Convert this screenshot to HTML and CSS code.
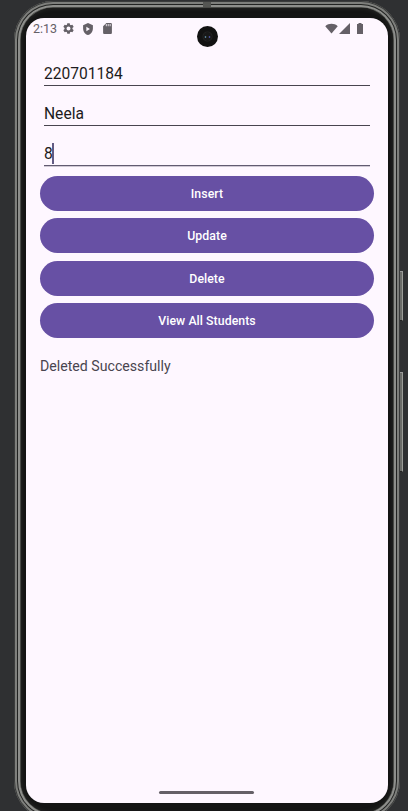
FILE: index.html
```
<!DOCTYPE html>
<html lang="en">
<head>
<meta charset="utf-8">
<title>Students</title>
<link rel="stylesheet" href="styles.css">
</head>
<body>
<div class="phone">
  <span class="seam"></span>
  <span class="side-key power"></span>
  <span class="side-key volume"></span>
  <div class="bezel">
    <main class="screen">
      <header class="status">
        <span class="clock">2:13</span>
        <svg class="gear" viewBox="2 2 20 20"><path d="M19.14 12.94c.04-.3.06-.61.06-.94s-.02-.64-.07-.94l2.03-1.58a.49.49 0 0 0 .12-.61l-1.92-3.32a.49.49 0 0 0-.59-.22l-2.39.96a7 7 0 0 0-1.62-.94l-.36-2.54a.48.48 0 0 0-.48-.41h-3.84a.48.48 0 0 0-.47.41l-.36 2.54a7.4 7.4 0 0 0-1.62.94l-2.39-.96a.48.48 0 0 0-.59.22L2.74 8.87a.48.48 0 0 0 .12.61l2.03 1.58a6 6 0 0 0 0 1.88l-2.03 1.58a.49.49 0 0 0-.12.61l1.92 3.32c.12.22.37.29.59.22l2.39-.96c.5.38 1.03.7 1.62.94l.36 2.54c.05.24.24.41.48.41h3.84c.24 0 .44-.17.47-.41l.36-2.54a7.4 7.4 0 0 0 1.62-.94l2.39.96c.22.08.47 0 .59-.22l1.92-3.32a.48.48 0 0 0-.12-.61zM12 15.6a3.6 3.6 0 1 1 0-7.2 3.6 3.6 0 0 1 0 7.2z"/></svg>
        <svg class="shield" viewBox="3 1 18 22"><path fill-rule="evenodd" d="M12 1 3 5v6c0 5.500 3.800 10.700 9 12 5.200-1.300 9-6.500 9-12V5zM9 8v8l6.500-4z"/></svg>
        <svg class="card" viewBox="4 2 16 20"><path fill-rule="evenodd" d="M18 2h-8L4 8v12a2 2 0 0 0 2 2h12a2 2 0 0 0 2-2V4a2 2 0 0 0-2-2zM9 4h1.500v4H9zm3.500 0H14v4h-1.500zm3.500 0h1.500v4H16z"/></svg>
        <svg class="wifi" viewBox="0 0 14 11"><path d="M.3 3C3.900-.5 10.100-.5 13.700 3L7 11z"/></svg>
        <svg class="signal" viewBox="0 0 11 11"><path d="M0 11 11 0v11z"/></svg>
        <svg class="battery" viewBox="0 0 6 11"><path d="M0 1h1.500V0h3v1H6v10H0z"/></svg>
      </header>
      <span class="camera"></span>
      <form class="form">
        <div class="field">220701184</div>
        <div class="field">Neela</div>
        <div class="field active">8<i class="caret"></i></div>
        <div class="buttons">
          <button type="button">Insert</button>
          <button type="button">Update</button>
          <button type="button">Delete</button>
          <button type="button">View All Students</button>
        </div>
      </form>
      <p class="message">Deleted Successfully</p>
      <div class="home"></div>
    </main>
  </div>
</div>
</body>
</html>
```
FILE: styles.css
```
* { box-sizing: border-box; }
html, body { height: 811px; overflow: hidden; }
body {
  margin: 0;
  padding: 1px 0 0 14px;
  background: #2f3032;
  font-family: Roboto, "Liberation Sans", sans-serif;
}
.phone {
  position: relative;
  width: 386px;
  height: 819px;
  padding: 7px;
  border-radius: 39px;
  background: #151515;
  box-shadow:
    inset 0 0 0 1px #3b3c3c,
    inset 0 0 0 3px #7e7f7c,
    inset 0 0 0 4px #222322,
    inset 0 0 0 6px #8d8e8b,
    inset 0 0 0 7px #484946;
}
.bezel {
  height: 805px;
  padding: 10px 5px 16px;
  border-radius: 32px;
  background: #141414;
  box-shadow: inset 0 0 4px #2a2b29;
}
.screen {
  position: relative;
  display: flex;
  flex-direction: column;
  width: 362px;
  height: 785px;
  border-radius: 18px;
  background: #fef7ff;
}
.seam {
  position: absolute;
  left: 189px;
  top: 1px;
  width: 8px;
  height: 5px;
  background: #555653;
}
.side-key {
  position: absolute;
  left: 386px;
  width: 3px;
  background: #6b6c69;
  border-right: 1px solid #9b9c98;
  border-top: 1px solid #999;
  border-bottom: 1px solid #222;
}
.power { top: 270px; height: 50px; }
.volume { top: 371px; height: 100px; }
.status {
  display: flex;
  align-items: center;
  height: 21px;
  padding: 0 25px 0 7px;
  color: #656067;
}
.status svg { display: block; flex: none; fill: #656067; }
.clock { width: 30px; font-size: 12.500px; line-height: 23px; }
.gear { width: 11px; height: 11px; }
.shield { width: 10px; height: 12px; margin-left: 9px; }
.card { width: 9px; height: 11px; margin-left: 10px; }
.wifi { width: 13px; height: 11px; margin-left: auto; }
.signal { width: 11px; height: 11px; margin-left: 1px; }
.battery { width: 6px; height: 11px; margin-left: 7px; }
.camera {
  position: absolute;
  left: 171px;
  top: 8px;
  width: 21px;
  height: 21px;
  border-radius: 50%;
  background:
    radial-gradient(circle at 8.500px 11px, #55798b 0 .7px, transparent 1.200px),
    radial-gradient(circle at 12.500px 11px, #464b94 0 .7px, transparent 1.200px),
    radial-gradient(circle, #181818 0 4px, #222 4.500px, #121212 5.500px);
}
.form { padding: 6px 14px 0; }
.field {
  display: flex;
  align-items: center;
  height: 23px;
  margin: 0 4px 17px;
  border-bottom: 1px solid #49454f;
  color: #1d1b20;
  font-size: 15.600px;
  line-height: 22px;
}
.field:first-child { margin-top: 18px; }
.field.active {
  height: 23px;
  margin-bottom: 10px;
  border-bottom: 1px solid #625b71;
  box-shadow: 0 1px #cfc8d4;
}
.caret { width: 2px; height: 21px; margin: -2px 0 0 -1px; background: #625b83; }
.buttons { display: grid; grid-auto-rows: 35px; row-gap: 7.330px; }
.buttons button {
  padding: 1px 0 0;
  border: 0;
  border-radius: 18px;
  background: #6750a4;
  color: #fff;
  font: 500 12.300px/34px Roboto, sans-serif;
  letter-spacing: .06px;
}
.message {
  margin: 18px 14px 0;
  color: #49454f;
  font-size: 14.150px;
  line-height: 20px;
}
.home {
  width: 95px;
  height: 3px;
  margin: auto auto 9px 133px;
  border-radius: 2px;
  background: #656067;
}
```
